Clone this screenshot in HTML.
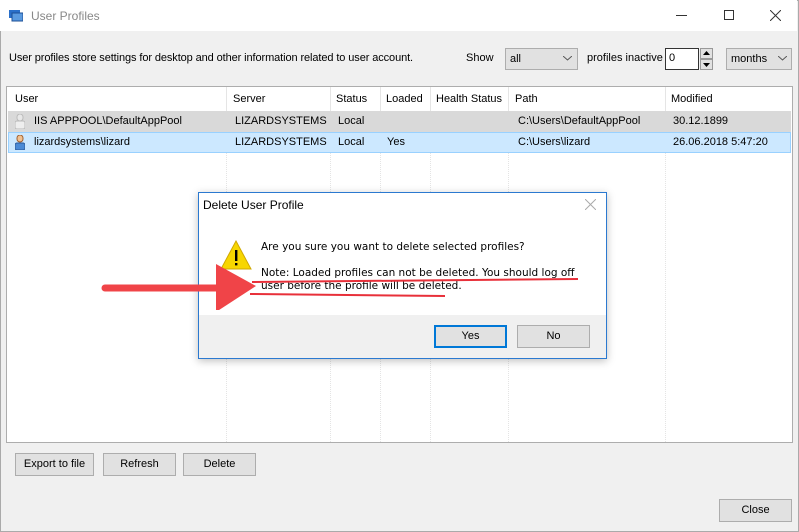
<!DOCTYPE html>
<html><head><meta charset="utf-8"><style>
*{box-sizing:border-box;margin:0;padding:0}
body{width:799px;height:532px;overflow:hidden;font-family:"Liberation Sans",sans-serif;font-size:11px;color:#000;background:#f0f0f0;position:relative}
.abs{position:absolute}
.win{left:0;top:0;width:799px;height:532px;border:1px solid #aaa;background:#f0f0f0}
.title{left:0;top:0;width:797px;height:31px;background:#fff}
.btn{position:absolute;background:#e1e1e1;border:1px solid #adadad;text-align:center;font-size:11px;line-height:21px}
.list{left:6px;top:86px;width:787px;height:357px;background:#fff;border:1px solid #adadad}
.vl{position:absolute;top:0;bottom:0;border-left:1px dotted #e4e4e4}
.hd{position:absolute;top:0;height:24px;line-height:24px}
.cell{position:absolute;line-height:21px}
</style></head><body>
<div class="abs win"></div>
<div class="abs title"></div>
<svg class="abs" style="left:9px;top:10px" width="14" height="12"><rect x="0" y="0" width="11" height="8" fill="#2a6fc9"/><rect x="3" y="3" width="11" height="8" fill="#5a9ae0" stroke="#1c4f96" stroke-width="1"/></svg>
<div class="abs" style="left:31px;top:9px;color:#888;font-size:12px">User Profiles</div>
<div class="abs" style="left:676px;top:15px;width:11px;border-top:1px solid #333"></div>
<div class="abs" style="left:724px;top:10px;width:10px;height:10px;border:1px solid #333"></div>
<svg class="abs" style="left:770px;top:10px" width="11" height="11"><path d="M0 0L11 11M11 0L0 11" stroke="#333"/></svg>

<div class="abs" style="left:9px;top:52px;letter-spacing:-0.1px">User profiles store settings for desktop and other information related to user account.</div>
<div class="abs" style="left:466px;top:52px">Show</div>
<div class="abs" style="left:505px;top:48px;width:73px;height:22px;background:#e1e1e1;border:1px solid #adadad;padding:4px 4px">all</div>
<svg class="abs" style="left:563px;top:56px" width="9" height="6"><path d="M0 0L4.5 4L9 0" stroke="#555" fill="none"/></svg>
<div class="abs" style="left:587px;top:52px">profiles inactive</div>
<div class="abs" style="left:665px;top:48px;width:34px;height:22px;background:#fff;border:1px solid #333;padding:3px 3px">0</div>
<div class="abs" style="left:700px;top:48px;width:13px;height:11px;background:#e1e1e1;border:1px solid #999"></div>
<div class="abs" style="left:700px;top:59px;width:13px;height:11px;background:#e1e1e1;border:1px solid #999"></div>
<svg class="abs" style="left:703px;top:51px" width="7" height="16"><path d="M0 4L3.5 0L7 4Z M0 12L3.5 16L7 12Z" fill="#000"/></svg>
<div class="abs" style="left:726px;top:48px;width:66px;height:22px;background:#e1e1e1;border:1px solid #adadad;padding:4px 4px">months</div>
<svg class="abs" style="left:778px;top:56px" width="9" height="6"><path d="M0 0L4.5 4L9 0" stroke="#555" fill="none"/></svg>

<div class="abs list">
 <div class="vl" style="left:219px"></div><div class="vl" style="left:323px"></div><div class="vl" style="left:373px"></div><div class="vl" style="left:423px"></div><div class="vl" style="left:501px"></div><div class="vl" style="left:658px"></div>
 <div class="abs" style="left:0;top:0;width:785px;height:24px;background:#fff"></div>
 <div class="abs" style="left:219px;top:0;height:24px;border-left:1px solid #e5e5e5"></div>
 <div class="abs" style="left:323px;top:0;height:24px;border-left:1px solid #e5e5e5"></div>
 <div class="abs" style="left:373px;top:0;height:24px;border-left:1px solid #e5e5e5"></div>
 <div class="abs" style="left:423px;top:0;height:24px;border-left:1px solid #e5e5e5"></div>
 <div class="abs" style="left:501px;top:0;height:24px;border-left:1px solid #e5e5e5"></div>
 <div class="abs" style="left:658px;top:0;height:24px;border-left:1px solid #e5e5e5"></div>
 <div class="hd" style="left:8px">User</div><div class="hd" style="left:226px">Server</div><div class="hd" style="left:329px">Status</div><div class="hd" style="left:379px">Loaded</div><div class="hd" style="left:429px">Health Status</div><div class="hd" style="left:508px">Path</div><div class="hd" style="left:664px">Modified</div>
 <div class="abs" style="left:1px;top:24px;width:783px;height:21px;background:#d9d9d9"></div>
 <div class="abs" style="left:1px;top:45px;width:783px;height:21px;background:#cce8ff;border:1px solid #99d1ff"></div>
 <svg class="abs" style="left:8px;top:27px" width="10" height="15"><rect x="2" y="0" width="6" height="7" rx="3" fill="#e8e8e8" stroke="#bbb"/><rect x="0" y="7" width="10" height="8" rx="2" fill="#eee" stroke="#bbb"/></svg>
 <svg class="abs" style="left:8px;top:48px" width="10" height="15"><rect x="2" y="0" width="6" height="7" rx="3" fill="#f0c090" stroke="#a06030"/><rect x="0" y="8" width="10" height="7" rx="2" fill="#4a8ad6" stroke="#2a5a9a"/></svg>
 <div class="cell" style="left:27px;top:24px">IIS APPPOOL\DefaultAppPool</div>
 <div class="cell" style="left:228px;top:24px">LIZARDSYSTEMS</div><div class="cell" style="left:331px;top:24px">Local</div>
 <div class="cell" style="left:511px;top:24px">C:\Users\DefaultAppPool</div><div class="cell" style="left:666px;top:24px">30.12.1899</div>
 <div class="cell" style="left:27px;top:45px">lizardsystems\lizard</div>
 <div class="cell" style="left:228px;top:45px">LIZARDSYSTEMS</div><div class="cell" style="left:331px;top:45px">Local</div><div class="cell" style="left:380px;top:45px">Yes</div>
 <div class="cell" style="left:511px;top:45px">C:\Users\lizard</div><div class="cell" style="left:666px;top:45px">26.06.2018 5:47:20</div>
</div>

<div class="btn" style="left:15px;top:453px;width:79px;height:23px">Export to file</div>
<div class="btn" style="left:103px;top:453px;width:73px;height:23px">Refresh</div>
<div class="btn" style="left:183px;top:453px;width:73px;height:23px">Delete</div>
<div class="btn" style="left:719px;top:499px;width:73px;height:23px">Close</div>

<div class="abs" style="left:198px;top:192px;width:409px;height:167px;background:#fff;border:1px solid #2b79d0;box-shadow:0 2px 8px rgba(0,0,0,.25)"></div>
<div class="abs" style="left:199px;top:315px;width:407px;height:43px;background:#f0f0f0"></div>
<div class="abs" style="left:203px;top:198px;font-size:12px">Delete User Profile</div>
<svg class="abs" style="left:585px;top:199px" width="11" height="11"><path d="M0 0L11 11M11 0L0 11" stroke="#aaa"/></svg>
<svg class="abs" style="left:220px;top:240px" width="32" height="30"><path d="M16 1L31 29H1Z" fill="#f7d600" stroke="#d0a800"/><rect x="15" y="10" width="2.4" height="11" fill="#000"/><rect x="15" y="23" width="2.4" height="2.4" fill="#000"/></svg>
<div class="abs" style="left:261px;top:241px;font-family:'DejaVu Sans',sans-serif;font-size:10.5px">Are you sure you want to delete selected profiles?</div>
<div class="abs" style="left:261px;top:267px;font-family:'DejaVu Sans',sans-serif;font-size:10.5px;line-height:13px;width:320px">Note: Loaded profiles can not be deleted. You should log off user before the profile will be deleted.</div>
<svg class="abs" style="left:100px;top:260px" width="490" height="50"><path d="M152 22Q300 20 478 19" stroke="#e8303a" stroke-width="2" fill="none"/><path d="M150 34Q250 35 345 36" stroke="#e8303a" stroke-width="2" fill="none"/><path d="M5 28L120 28" stroke="#f04448" stroke-width="7" stroke-linecap="round"/><path d="M116 4L156 26L116 52Z" fill="#f04448"/></svg>
<div class="btn" style="left:434px;top:325px;width:73px;height:23px;border:2px solid #0078d7;line-height:19px">Yes</div>
<div class="btn" style="left:517px;top:325px;width:73px;height:23px">No</div>
</body></html>
